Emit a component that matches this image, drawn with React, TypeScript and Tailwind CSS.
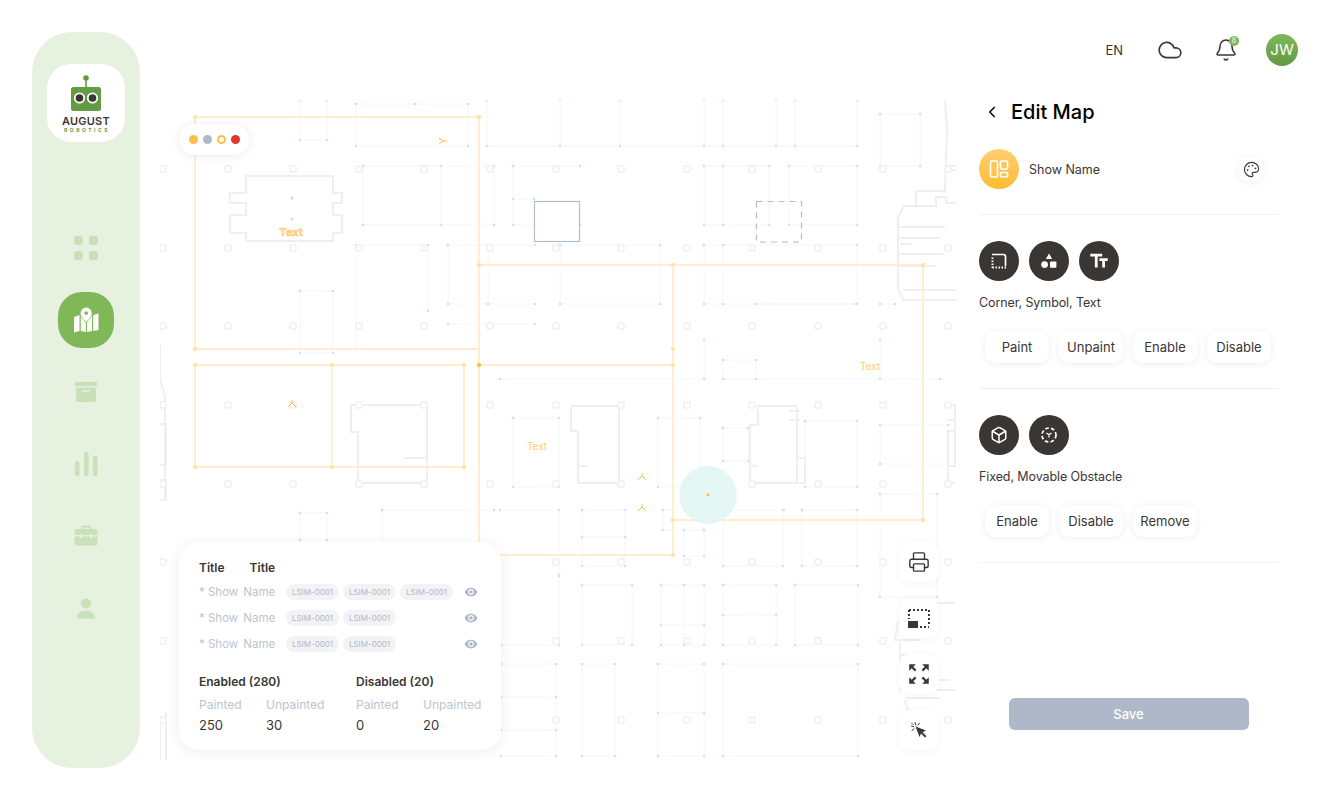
import { Bell, Box, ChevronLeft, Cloud, Palette, Printer } from 'lucide-react';
import { MdTextFields, MdVisibility, MdZoomOutMap } from 'react-icons/md';

const font = { fontFamily: 'Inter, "Noto Sans", sans-serif' };

// grid of pillars on the floor plan
const pillarX = [163, 228, 293, 359, 424, 490, 556, 621, 687, 752, 818, 883, 948];
const pillarY = [169, 248, 326, 405, 484, 562, 641, 720];

// light blue room outlines, each one a polyline
const rooms: number[][][] = [
  [[300, 100], [300, 140], [327, 140], [327, 100]],
  [[356, 104], [468, 104], [468, 146], [356, 146], [356, 104]],
  [[415, 104], [415, 104]],
  [[487, 100], [487, 146], [560, 146], [560, 100]],
  [[363, 166], [494, 166], [494, 225], [363, 225], [363, 166]],
  [[441, 166], [441, 225]],
  [[513, 166], [580, 166]],
  [[513, 166], [513, 225], [580, 225]],
  [[513, 199], [534, 199]],
  [[356, 245], [428, 245], [428, 311]],
  [[356, 245], [356, 349]],
  [[448, 245], [535, 245]],
  [[448, 245], [448, 304], [535, 304]],
  [[488, 245], [488, 304]],
  [[448, 324], [535, 324]],
  [[300, 291], [333, 291], [333, 353], [300, 353], [300, 291]],
  [[620, 100], [620, 146]],
  [[560, 146], [704, 146], [704, 100]],
  [[704, 146], [857, 146], [857, 100]],
  [[723, 100], [723, 146]],
  [[776, 100], [776, 146]],
  [[795, 100], [795, 146]],
  [[704, 166], [769, 166], [769, 225], [704, 225], [704, 166]],
  [[723, 166], [723, 225]],
  [[789, 166], [857, 166], [857, 225], [789, 225], [789, 166]],
  [[704, 245], [857, 245], [857, 304], [704, 304], [704, 245]],
  [[723, 245], [723, 304]],
  [[880, 114], [920, 114], [920, 166], [880, 166], [880, 114]],
  [[560, 245], [660, 245], [660, 304], [560, 304], [560, 245]],
  [[756, 304], [856, 304]],
  [[880, 304], [895, 304]],
  [[500, 379], [704, 379], [704, 340]],
  [[723, 360], [756, 360], [756, 379], [723, 379], [723, 360]],
  [[723, 379], [940, 379]],
  [[880, 340], [880, 379]],
  [[513, 418], [559, 418], [559, 487], [513, 487], [513, 418]],
  [[658, 418], [700, 418], [700, 487], [658, 487], [658, 418]],
  [[723, 428], [748, 428], [748, 461], [723, 461], [723, 428]],
  [[805, 421], [857, 421], [857, 487], [805, 487], [805, 421]],
  [[880, 425], [948, 425]],
  [[880, 464], [948, 464]],
  [[880, 425], [880, 464]],
  [[500, 510], [559, 510], [559, 576]],
  [[582, 510], [625, 510], [625, 537], [582, 537], [582, 510]],
  [[625, 537], [625, 566], [582, 566], [582, 537]],
  [[663, 510], [784, 510]],
  [[663, 510], [663, 530], [704, 530], [704, 510]],
  [[684, 530], [684, 556], [704, 556], [704, 530]],
  [[723, 510], [723, 566], [783, 566], [783, 510]],
  [[802, 510], [857, 510], [857, 566], [802, 566], [802, 510]],
  [[880, 494], [937, 494], [937, 597], [880, 597], [880, 494]],
  [[382, 510], [494, 510]],
  [[382, 510], [382, 550]],
  [[300, 513], [327, 513], [327, 540]],
  [[300, 513], [300, 540]],
  [[582, 585], [632, 585], [632, 645], [582, 645], [582, 585]],
  [[661, 585], [704, 585], [704, 645], [661, 645], [661, 585]],
  [[684, 585], [684, 645]],
  [[661, 625], [704, 625]],
  [[723, 585], [776, 585], [776, 645], [723, 645], [723, 585]],
  [[723, 615], [776, 615]],
  [[795, 585], [858, 585], [858, 645], [795, 645], [795, 585]],
  [[501, 645], [559, 645], [559, 575]],
  [[501, 664], [556, 664], [556, 756], [501, 756]],
  [[501, 697], [556, 697]],
  [[501, 730], [556, 730]],
  [[582, 664], [615, 664], [615, 756], [582, 756], [582, 664]],
  [[658, 664], [704, 664], [704, 756], [658, 756], [658, 664]],
  [[658, 713], [704, 713]],
  [[723, 664], [858, 664], [858, 756], [723, 756], [723, 664]],
];

// grey concrete outlines of the building
const walls = [
  'M246 176H333V193H342V203H333V215H342V233H333V241H246V233H230V215H246V203H230V193H246Z',
  'M351 405H427V483H358V432H351Z',
  'M404 458H427',
  'M571 406H619V483H578V431H571Z',
  'M578 466H587',
  'M758 406H797V483H750V425H758Z',
  'M750 466H758M789 411H800M789 420H800',
  'M797 458H805V483H797Z',
  'M945 100L947 130L945 191H916V206H936V197H946V203H956',
  'M916 206H904L898 218V288L903 300H956M898 227H945M898 238H940M898 254H943M898 266H935M903 290H956M900 244H912',
  'M946 166H956M946 170H956',
  'M948 405H955V431H948V483H955M948 420H955V466H948',
  'M160 345V380L165 396V500M160 402H165M160 424H166V465H160M160 480H166V500H160',
  'M900 603H955M898 622L895 640H900V690H955M902 640H920M900 655H932M900 680H950M905 700L910 720M906 698H940',
  'M160 720V760M166 712V760',
];

function MapLayer() {
  return (
    <svg viewBox="160 100 796 660" className="absolute inset-0 w-full h-full">
      {rooms.map((r, i) => (
        <polyline key={i} points={r.map((p) => p.join(',')).join(' ')} fill="none" stroke="#f0f8ff" strokeWidth="1" />
      ))}
      {rooms.map((r, i) =>
        r.map((p, j) => <circle key={`${i}-${j}`} cx={p[0]} cy={p[1]} r="1.3" fill="#cfe0fb" />),
      )}
      {walls.map((d, i) => (
        <path key={i} d={d} fill="none" stroke="#efeff0" strokeWidth="2" />
      ))}
      {pillarX.map((x) =>
        pillarY.map((y) => (
          <rect key={`${x}-${y}`} x={x - 3} y={y - 3} width="6" height="6" rx="1" fill="#fff" stroke="#f0f0f1" strokeWidth="1.5" />
        )),
      )}
      <circle cx="292" cy="198" r="1.6" fill="#dcdcdd" />
      <circle cx="292" cy="219" r="1.6" fill="#dcdcdd" />

      <g fill="none" stroke="#ffeecb" strokeWidth="1.8">
        <path d="M195 117H479V349H195Z" />
        <path d="M479 265H923V520H673" />
        <path d="M673 265V555H479V349" />
        <path d="M479 365H673" />
        <path d="M195 365H464V467H195Z" />
        <path d="M332 365V467" />
      </g>
      {[[195, 117], [479, 117], [195, 349], [673, 349], [479, 265], [673, 265], [923, 265], [923, 520], [673, 520], [673, 555], [479, 555], [195, 365], [332, 365], [464, 365], [195, 467], [332, 467], [464, 467], [673, 365]].map(([x, y]) => (
        <circle key={`${x}-${y}`} cx={x} cy={y} r="2.2" fill="#ffe3ad" />
      ))}
      <circle cx="479" cy="365" r="2.2" fill="#ffbf47" />

      <rect x="534.5" y="201.5" width="45" height="40" fill="#fff" stroke="#b2bccb" strokeWidth="1.2" />
      <rect x="756.5" y="201.5" width="45" height="40.5" fill="none" stroke="#b2bccb" strokeWidth="1.2" strokeDasharray="6 5" />

      <circle cx="708" cy="495" r="29" fill="#dff5f3" fillOpacity="0.8" />
      <circle cx="708" cy="495" r="1.4" fill="#ffb52e" />

      <g stroke="#ffbf47" strokeWidth="1" fill="none">
        <path d="M439 138L443 141L439 144M443 141H447" />
        <path d="M292 400V403L288 407M292 403L296 407" />
        <path d="M642 473V476L638 480M642 476L646 480" />
        <path d="M642 504V507L638 511M642 507L646 511" />
      </g>

      <g style={font} fontSize="10" fill="#ffcd6b" textAnchor="middle">
        <text x="291" y="236" fontSize="11" fontWeight="700" fill="#ffe3ad" stroke="#ffbf47" strokeWidth="0.5">Text</text>
        <text x="870" y="370">Text</text>
        <text x="537" y="450">Text</text>
      </g>
    </svg>
  );
}

function Logo() {
  return (
    <div className="w-[78px] h-[78px] rounded-[24px] bg-white flex flex-col items-center pt-[11px]">
      <svg width="32" height="37" viewBox="0 0 32 37">
        <circle cx="16" cy="3" r="2.8" fill="#629b41" />
        <rect x="15.2" y="3" width="1.6" height="10" fill="#629b41" />
        <rect x="1" y="12" width="30" height="24" rx="2.5" fill="#629b41" />
        <circle cx="9.5" cy="23" r="5.6" fill="#fff" />
        <circle cx="22.5" cy="23" r="5.6" fill="#fff" />
        <circle cx="9.5" cy="23" r="3.8" fill="#3a3634" />
        <circle cx="22.5" cy="23" r="3.8" fill="#3a3634" />
      </svg>
      <span className="text-[11px] leading-[12px] mt-[3px] font-semibold text-[#3a3634] tracking-[0.2px]">AUGUST</span>
      <span className="text-[5px] leading-[6px] font-bold text-[#629b41] tracking-[2.5px] ml-[2px]">ROBOTICS</span>
    </div>
  );
}

function Sidebar() {
  const c = '#c9e0b8';
  return (
    <aside className="w-[108px] h-[736px] shrink-0 bg-[#e7f1df] rounded-[40px] flex flex-col items-center pt-[32px]">
      <Logo />
      <div className="mt-[94px] grid grid-cols-2 gap-[6px]">
        <div className="w-[9px] h-[9px] rounded-[3px] bg-[#c9e0b8]" />
        <div className="w-[9px] h-[9px] rounded-[3px] bg-[#c9e0b8]" />
        <div className="w-[9px] h-[9px] rounded-[3px] bg-[#c9e0b8]" />
        <div className="w-[9px] h-[9px] rounded-[3px] bg-[#c9e0b8]" />
      </div>
      <div className="mt-[32px] w-[56px] h-[56px] rounded-[24px] bg-[#80b858] flex items-center justify-center">
        <svg width="26" height="26" viewBox="0 0 26 26" fill="#fff">
          <path d="M1 10L6.5 8V24L1 25.5Z" />
          <path d="M7.8 8L12.8 9.5V25L7.8 24Z" />
          <path d="M14 10L19 8V24L14 25Z" />
          <path d="M20.2 8L25.5 6.5V23L20.2 24Z" />
          <path
            fillRule="evenodd"
            stroke="#80b858"
            strokeWidth="1.2"
            paintOrder="stroke"
            d="M13.2 0.5A5.6 5.6 0 0 1 18.8 6.1C18.8 9 15.5 12.8 13.2 15C10.9 12.8 7.6 9 7.6 6.1A5.6 5.6 0 0 1 13.2 0.5ZM13.2 4.2A1.9 1.9 0 1 0 13.2 8A1.9 1.9 0 1 0 13.2 4.2Z"
          />
        </svg>
      </div>
      <svg className="mt-[32px]" width="24" height="24" viewBox="0 0 24 24" fill={c}>
        <rect x="1" y="2" width="22" height="4" rx="1" />
        <path fillRule="evenodd" d="M2 7.5H22V20A2 2 0 0 1 20 22H4A2 2 0 0 1 2 20ZM8.5 10.5V12H15.5V10.5Z" />
      </svg>
      <svg className="mt-[47px]" width="24" height="26" viewBox="0 0 24 26" fill={c}>
        <rect x="1" y="10" width="4.5" height="15" rx="2.2" />
        <rect x="10" y="1" width="4.5" height="24" rx="2.2" />
        <rect x="19" y="5" width="4.5" height="20" rx="2.2" />
      </svg>
      <svg className="mt-[48px]" width="24" height="21" viewBox="0 0 24 21" fill={c}>
        <path fillRule="evenodd" d="M7 4V2.5A2 2 0 0 1 9 0.5H15A2 2 0 0 1 17 2.5V4H20.5A3 3 0 0 1 23.5 7V10H18V8.8H16V10H8V8.8H6V10H0.5V7A3 3 0 0 1 3.5 4ZM9 2.5V4H15V2.5Z" />
        <path d="M0.5 11.5H6V13H8V11.5H16V13H18V11.5H23.5V18.5A2 2 0 0 1 21.5 20.5H2.5A2 2 0 0 1 0.5 18.5Z" />
      </svg>
      <svg className="mt-[52px]" width="20" height="21" viewBox="0 0 20 21" fill={c}>
        <circle cx="10" cy="5.5" r="5" />
        <path d="M1 20.5C1 15.5 5 12.5 10 12.5C15 12.5 19 15.5 19 20.5Z" />
      </svg>
    </aside>
  );
}

function Chip() {
  return (
    <span className="w-[53px] h-[16px] rounded-full bg-[#f3f3f5] text-[#aeb8c8] text-[8px] flex items-center justify-center">LSIM-0001</span>
  );
}

function LegendRow({ chips }: { chips: number }) {
  return (
    <div className="flex items-center h-[16px]">
      <span className="w-[87px] pt-[1px] text-[#bcc4d2] text-[11.5px] flex gap-[5px] shrink-0">
        <span>* Show</span>
        <span>Name</span>
      </span>
      <div className="flex gap-[4px] w-[175px]">
        {Array.from({ length: chips }).map((_, i) => (
          <Chip key={i} />
        ))}
      </div>
      <MdVisibility className="w-[14px] h-[14px] text-[#aeb8c8] ml-[3px]" />
    </div>
  );
}

function Stat({ label, value, className }: { label: string; value: string; className: string }) {
  return (
    <div className={className}>
      <div className="text-[#bcc4d2] text-[12px] leading-[16px]">{label}</div>
      <div className="text-[#3a3634] text-[13px] leading-[16px] mt-[4px]">{value}</div>
    </div>
  );
}

function Legend() {
  return (
    <div className="absolute left-[19px] bottom-[10px] w-[322px] h-[208px] bg-white rounded-[20px] shadow-[0_2px_14px_rgba(40,50,70,0.08)] pl-[20px] pr-[16px] pt-[18px]">
      <div className="flex gap-[25px] text-[12px] leading-[16px] font-semibold text-[#3a3634]">
        <span>Title</span>
        <span>Title</span>
      </div>
      <div className="mt-[8px] flex flex-col gap-[10px]">
        <LegendRow chips={3} />
        <LegendRow chips={2} />
        <LegendRow chips={2} />
      </div>
      <div className="mt-[22px] flex text-[12px] leading-[16px] font-semibold text-[#3a3634]">
        <span className="w-[157px]">Enabled (280)</span>
        <span>Disabled (20)</span>
      </div>
      <div className="mt-[7px] flex">
        <Stat label="Painted" value="250" className="w-[67px]" />
        <Stat label="Unpainted" value="30" className="w-[90px]" />
        <Stat label="Painted" value="0" className="w-[67px]" />
        <Stat label="Unpainted" value="20" className="w-[60px]" />
      </div>
    </div>
  );
}

function ToolButton({ children }: { children: React.ReactNode }) {
  return (
    <button className="w-[40px] h-[40px] rounded-[10px] bg-white shadow-[0_1px_6px_rgba(40,50,70,0.06)] flex items-center justify-center text-[#3a3634]">
      {children}
    </button>
  );
}

function MapTools() {
  return (
    <div className="absolute right-[17px] bottom-[10px] flex flex-col gap-[16px]">
      <ToolButton>
        <Printer className="w-[22px] h-[22px]" strokeWidth={1.5} />
      </ToolButton>
      <ToolButton>
        <svg width="22" height="19" viewBox="0 0 22 19" fill="#3a3634">
          <path d="M1 1H21V17" fill="none" stroke="#3a3634" strokeWidth="2" strokeDasharray="2 2" />
          <path d="M1 1V10" fill="none" stroke="#3a3634" strokeWidth="2" strokeDasharray="2 2" />
          <rect x="0" y="12" width="10" height="7" />
          <path d="M12 18H21" fill="none" stroke="#3a3634" strokeWidth="2" strokeDasharray="2 2" />
        </svg>
      </ToolButton>
      <ToolButton>
        <MdZoomOutMap className="w-[26px] h-[26px]" />
      </ToolButton>
      <ToolButton>
        <svg width="16" height="16" viewBox="0 0 16 16" fill="#3a3634">
          <path d="M4.5 4.5L15 8.5L11.5 10.2L15.5 14.2L14 15.5L10 11.5L8.5 15Z" />
          <path d="M4 0.5L4.8 3M0.5 4L3 4.8M8.5 1L7 3M1 8.5L3 7M0.5 1L2 2.5" stroke="#3a3634" strokeWidth="1" strokeLinecap="round" />
        </svg>
      </ToolButton>
    </div>
  );
}

function DarkIcon({ children }: { children: React.ReactNode }) {
  return <div className="w-[40px] h-[40px] rounded-full bg-[#3a3634] flex items-center justify-center text-white">{children}</div>;
}

function ActionButton({ label }: { label: string }) {
  return (
    <button className="w-[64px] h-[32px] pt-[2px] rounded-[10px] bg-white shadow-[0_1px_6px_rgba(40,50,70,0.09)] text-[13px] text-[#3a3634]">{label}</button>
  );
}

function EditPanel() {
  return (
    <section className="w-[299px] h-full flex flex-col shrink-0 text-[#3a3634]">
      <div className="flex items-center h-[26px] mt-[-1px] ml-[4px] gap-[10px]">
        <ChevronLeft className="w-[18px] h-[18px] text-[#111]" strokeWidth={2.25} />
        <h1 className="text-[20px] font-medium text-black">Edit Map</h1>
      </div>
      <div className="flex items-center mt-[24px] h-[40px]">
        <div className="w-[40px] h-[40px] rounded-full bg-gradient-to-b from-[#ffcf70] to-[#ffbc2c] flex items-center justify-center">
          <svg width="20" height="20" viewBox="0 0 20 20" fill="none" stroke="#fff" strokeWidth="1.6">
            <rect x="1.5" y="2" width="7" height="16" rx="1.2" />
            <rect x="11.5" y="2" width="7" height="8" rx="1.2" />
            <rect x="11.5" y="13.5" width="7" height="4.5" rx="1.2" />
          </svg>
        </div>
        <span className="ml-[10px] text-[12.5px] pt-[2px]">Show Name</span>
        <div className="ml-auto mr-[15px] w-[24px] h-[24px] rounded-[7px] bg-white shadow-[0_1px_6px_rgba(40,50,70,0.08)] flex items-center justify-center">
          <Palette className="w-[17px] h-[17px]" strokeWidth={1.6} />
        </div>
      </div>
      <hr className="mt-[25px] border-t border-[#f1f1f3]" />

      <div className="flex gap-[10px] mt-[26px]">
        <DarkIcon>
          <svg width="16" height="16" viewBox="0 0 16 16" fill="none" stroke="#fff" strokeWidth="2">
            <path d="M1.5 15V3" strokeDasharray="1.5 1.5" />
            <path d="M1.5 14.5H15" strokeDasharray="1.5 1.5" />
            <path d="M1 1.5H12.5A2 2 0 0 1 14.5 3.5V13" strokeWidth="1.7" />
          </svg>
        </DarkIcon>
        <DarkIcon>
          <svg width="18" height="18" viewBox="0 0 18 18" fill="#fff">
            <path d="M9 1.5L12.2 7H5.8Z" />
            <circle cx="4.6" cy="12.6" r="3.4" />
            <rect x="10" y="9.4" width="6.4" height="6.4" rx="0.8" />
          </svg>
        </DarkIcon>
        <DarkIcon>
          <MdTextFields className="w-[22px] h-[22px]" />
        </DarkIcon>
      </div>
      <p className="mt-[14px] text-[12.5px] tracking-[-0.1px] leading-[16px]">Corner, Symbol, Text</p>
      <div className="flex gap-[10px] mt-[20px] pl-[6px]">
        {['Paint', 'Unpaint', 'Enable', 'Disable'].map((t) => (
          <ActionButton key={t} label={t} />
        ))}
      </div>
      <hr className="mt-[25px] border-t border-[#f1f1f3]" />

      <div className="flex gap-[10px] mt-[26px]">
        <DarkIcon>
          <Box className="w-[18px] h-[18px]" strokeWidth={2} />
        </DarkIcon>
        <DarkIcon>
          <svg width="18" height="18" viewBox="0 0 18 18" fill="none" stroke="#fff" strokeWidth="1.7">
            <circle cx="9" cy="9" r="7" strokeDasharray="3.6 2.2" />
            <path d="M6.5 7L9 8.8L11.5 7M9 8.8V11.5" strokeWidth="1.3" />
          </svg>
        </DarkIcon>
      </div>
      <p className="mt-[14px] text-[12.5px] tracking-[-0.1px] leading-[16px]">Fixed, Movable Obstacle</p>
      <div className="flex gap-[10px] mt-[20px] pl-[6px]">
        {['Enable', 'Disable', 'Remove'].map((t) => (
          <ActionButton key={t} label={t} />
        ))}
      </div>
      <hr className="mt-[25px] border-t border-[#f1f1f3]" />

      <button className="mt-[135px] mx-auto w-[240px] h-[32px] pt-[2px] rounded-[6px] bg-[#aeb8c8] text-white text-[13px] font-medium">Save</button>
    </section>
  );
}

function TopBar() {
  return (
    <header className="h-[32px] flex items-center justify-end text-[#3a3634] shrink-0">
      <span className="text-[13px] pt-[2px] mr-[34px]">EN</span>
      <Cloud className="w-[26px] h-[26px] mr-[31px]" strokeWidth={1.5} />
      <div className="relative mr-[28px]">
        <Bell className="w-[24px] h-[24px]" strokeWidth={1.5} />
        <span className="absolute top-[-2px] right-[-1px] w-[10px] h-[10px] rounded-full bg-[#7fb755] text-white text-[7px] leading-[10px] text-center">8</span>
      </div>
      <div className="w-[32px] h-[32px] rounded-full bg-gradient-to-b from-[#80b858] to-[#649944] text-white text-[15px] flex items-center justify-center">JW</div>
    </header>
  );
}

export default function App() {
  return (
    <div className="w-[1334px] h-[800px] bg-white flex pl-[32px] pt-[32px] overflow-hidden" style={font}>
      <Sidebar />
      <main className="flex-1 flex flex-col ml-[20px] pr-[36px] pt-[2px]">
        <TopBar />
        <div className="flex mt-[34px] h-[660px] gap-[23px]">
          <div className="relative w-[796px] h-[660px] shrink-0">
            <MapLayer />
            <div className="absolute left-[19px] top-[24px] w-[70px] h-[31px] rounded-full bg-white shadow-[0_1px_8px_rgba(40,50,70,0.1)] flex items-center justify-center gap-[5px]">
              <span className="w-[9px] h-[9px] rounded-full bg-[#ffbf47]" />
              <span className="w-[9px] h-[9px] rounded-full bg-[#aeb8c8]" />
              <span className="w-[9px] h-[9px] rounded-full border-2 border-[#ffbf47]" />
              <span className="w-[9px] h-[9px] rounded-full bg-[#e03530]" />
            </div>
            <Legend />
            <MapTools />
          </div>
          <EditPanel />
        </div>
      </main>
    </div>
  );
}
